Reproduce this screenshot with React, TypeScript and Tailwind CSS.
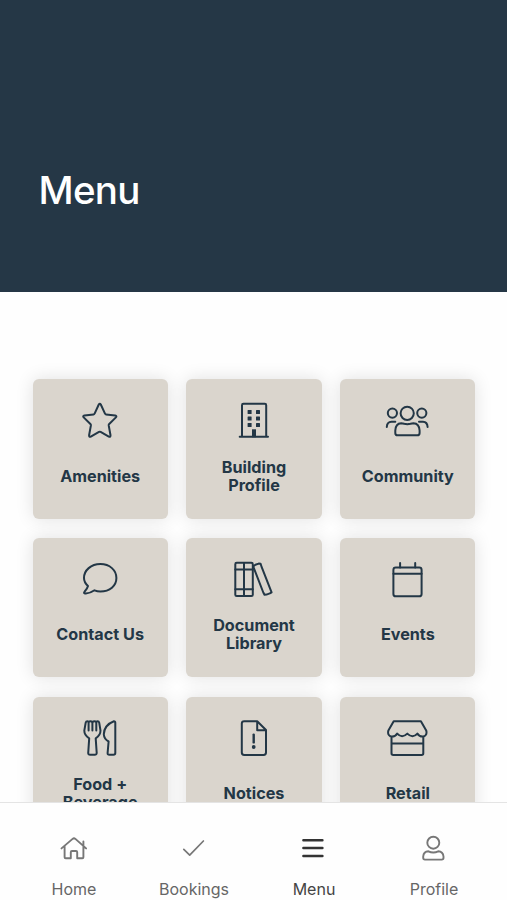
import type { ReactNode } from "react";

type Tile = { lines: string[]; icon: ReactNode };

const tiles: Tile[] = [
  {
    lines: ["Amenities"],
    icon: (
      <path d="M22.8 4.5Q23.8 2.8 24.8 4.5L29 13.6Q29.2 14.3 30 14.4L39.2 15.6Q41.2 16 39.9 17.4L33.2 24Q32.6 24.6 32.7 25.4L34.5 35.3Q34.6 37.4 32.8 36.6L24.6 31.9Q23.8 31.5 23 31.9L14.8 36.6Q13 37.4 13.1 35.3L14.9 25.4Q15 24.6 14.4 24L7.7 17.4Q6.4 16 8.4 15.6L17.6 14.4Q18.4 14.3 18.6 13.6Z" />
    ),
  },
  {
    lines: ["Building", "Profile"],
    icon: (
      <>
        <path d="M12 36.7V5.2Q12 3.8 13.4 3.8H34.8Q36.2 3.8 36.2 5.2V36.7M9.7 36.8H38" />
        <g fill="currentColor" stroke="none">
          <rect x="17.6" y="10" width="4" height="4" rx=".5" />
          <rect x="26" y="10" width="4" height="4" rx=".5" />
          <rect x="17.6" y="16.5" width="4" height="4" rx=".5" />
          <rect x="26" y="16.5" width="4" height="4" rx=".5" />
          <rect x="17.6" y="23" width="4" height="4" rx=".5" />
          <rect x="26" y="23" width="4" height="4" rx=".5" />
          <rect x="22" y="29.3" width="4" height="8" />
        </g>
      </>
    ),
  },
  {
    lines: ["Community"],
    icon: (
      <>
        <circle cx="23.2" cy="13.3" r="6.6" />
        <circle cx="8.4" cy="13.1" r="4.6" />
        <circle cx="37.8" cy="13.1" r="4.6" />
        <path d="M13.5 35.3H33.2Q35.6 35.3 35.6 32.9V30.5Q35.2 23.4 29.5 23.2Q27.8 23.2 26.5 23.7Q23.3 24.6 20.2 23.7Q18.8 23.2 17.2 23.2Q11.6 23.4 11.3 30.5V32.9Q11.3 35.3 13.5 35.3ZM2.8 27Q3 21.8 7.5 21.7H11.3M35 21.7H39Q43.3 21.8 43.6 27" />
      </>
    ),
  },
  {
    lines: ["Contact Us"],
    icon: (
      <path d="M24.4 5.1C33.8 5.1 40.4 11.2 40.4 19C40.4 26.8 33.8 32.5 24.4 32.5Q21.4 32.5 18.5 31.3Q13.5 34.8 9 34.4Q7.4 34.1 8.5 32.8Q11.2 30 12 27Q8 23.5 8 19C8 11.2 15 5.1 24.4 5.1Z" />
    ),
  },
  {
    lines: ["Document", "Library"],
    icon: (
      <>
        <rect x="5.3" y="3.8" width="17.5" height="33.3" rx="1.4" />
        <path d="M14 4V37M5.3 10.4H22.8M5.3 30.3H22.8M23.2 7.4L25.4 5.8L28.7 4.6L30.6 4.8L31.7 8.2L40.7 31.1L41.6 33.3L39.8 34.4L36.5 35.6L34.5 35.8L33.3 33.5L23.2 7.4" />
      </>
    ),
  },
  {
    lines: ["Events"],
    icon: (
      <>
        <rect x="9.4" y="8.5" width="28.2" height="28.8" rx="2.4" />
        <path d="M9.4 14.7H37.6M16.1 3.9V8.5M31.2 3.9V8.5" />
      </>
    ),
  },
  {
    lines: ["Food +", "Beverage"],
    icon: (
      <>
        <path d="M12.6 12.4V4.4Q12.6 3.2 11.4 3.2Q10 3.2 9.7 4.6L8.3 12.6Q8.3 17.4 13.2 20.4L12.2 35Q12.3 36.8 14.1 36.8H18.8Q20.5 36.8 20.7 35L19.7 20.4Q24.5 17.4 24.5 12.6L23.2 4.6Q22.9 3.2 21.5 3.2Q20.3 3.2 20.3 4.4V12.4M12.6 4.2Q13.4 3.2 14.5 3.2Q16.4 3.2 16.4 5V12.4M16.4 5Q16.4 3.2 18.4 3.2Q19.5 3.2 20.3 4.2" />
        <path d="M37.9 3.2Q39.3 3.2 39.3 4.8V35Q39.3 36.8 37.5 36.8H33.3Q31.5 36.8 31.6 35L32.6 23.5Q28.1 21.2 27.8 16.3Q28.1 7 37.9 3.2Z" />
      </>
    ),
  },
  {
    lines: ["Notices"],
    icon: (
      <>
        <path d="M14.2 3.2H27.2L36 12V34.6Q36 37 33.6 37H14.2Q11.8 37 11.8 34.6V5.6Q11.8 3.2 14.2 3.2ZM27.2 3.4V12.3H35.8" />
        <path strokeWidth="2.4" d="M23.7 16.6V24.4" />
        <circle cx="23.7" cy="29" r="1.9" fill="currentColor" stroke="none" />
      </>
    ),
  },
  {
    lines: ["Retail"],
    icon: (
      <path d="M9.7 3.2H36.9L42.2 12.4Q43.5 16.5 40.2 18.3Q36 19.4 33.4 15.6Q28.6 20.8 23.3 15.6Q18 20.8 13.2 15.6Q10.6 19.4 6.4 18.3Q3.1 16.5 4.4 12.4ZM7.5 18.6V35.2Q7.5 36.9 9.2 36.9H37.6Q39.3 36.9 39.3 35.2V18.6M7.5 25.4H39.3" />
    ),
  },
];

const tabs = [
  {
    label: "Home",
    active: false,
    icon: (
      <path d="M3.5 16.4L14.6 6.9Q16 5.8 17.4 6.9L28.1 16.4M25.4 13.7V9.5M6.6 14.2V25.2Q6.6 26.3 7.7 26.3H12.8V20.2Q12.8 19 14 19H18Q19.2 19 19.2 20.2V26.3H24.3Q25.4 26.3 25.4 25.2V14.2" />
    ),
  },
  {
    label: "Bookings",
    active: false,
    icon: <path strokeWidth="1.7" d="M5.8 17.4L11.7 23.2L25.4 9" />,
  },
  {
    label: "Menu",
    active: true,
    icon: <path strokeWidth="2.5" d="M5.4 8.2H24.4M5.4 16.1H24.4M5.4 24.1H24.4" />,
  },
  {
    label: "Profile",
    active: false,
    icon: (
      <>
        <circle cx="15.3" cy="10.7" r="6" />
        <path d="M7 27.6H23.7Q25.5 27.6 25.5 25.8V24.5Q25 19.6 20.2 19.3Q17.8 20.5 15.3 20.5Q12.8 20.5 10.4 19.3Q5.6 19.6 5.2 24.5V25.8Q5.2 27.6 7 27.6Z" />
      </>
    ),
  },
];

function MenuTile({ lines, icon }: Tile) {
  return (
    <button className="flex h-[139.5px] flex-col items-center rounded-md bg-[#dad5cd] pt-[21.4px] text-[#233746] shadow-[0_0_18px_rgba(0,0,0,0.12)]">
      <svg
        className="h-10 w-12 shrink-0"
        viewBox="0 0 48 40"
        fill="none"
        stroke="currentColor"
        strokeWidth="2"
        strokeLinecap="round"
        strokeLinejoin="round"
      >
        {icon}
      </svg>
      <span className="mt-[17.2px] flex h-9 flex-col justify-center text-center text-[16.2px] leading-[18px] font-bold">
        {lines.map((line) => (
          <span key={line}>{line}</span>
        ))}
      </span>
    </button>
  );
}

export default function App() {
  return (
    <div className="flex h-[900px] w-[507px] flex-col overflow-hidden bg-white font-['Inter','Liberation_Sans',sans-serif]">
      <header className="h-[292px] shrink-0 bg-[#253746] pt-[166px] pl-[38.5px]">
        <h1 className="text-[38.5px] leading-[48px] font-medium tracking-[-0.7px] text-white">Menu</h1>
      </header>
      <main className="min-h-0 flex-1 overflow-hidden bg-[#fefefe] pt-[87px] pr-[31.5px] pl-[32.5px]">
        <div className="grid grid-cols-3 gap-x-[18.5px] gap-y-[19.25px]">
          {tiles.map((tile) => (
            <MenuTile key={tile.lines[0]} {...tile} />
          ))}
        </div>
      </main>
      <nav className="grid h-[98px] shrink-0 grid-cols-4 border-t border-[#e4e4e4] bg-[#fefefe] pt-[29px] pr-[13px] pl-[14px]">
        {tabs.map((tab) => (
          <button
            key={tab.label}
            className={`flex flex-col items-center ${tab.active ? "text-[#333333]" : "text-[#777777]"}`}
          >
            <svg
              className="h-8 w-8 shrink-0"
              viewBox="0 0 32 32"
              fill="none"
              stroke="currentColor"
              strokeWidth="1.9"
              strokeLinecap="round"
              strokeLinejoin="round"
            >
              {tab.icon}
            </svg>
            <span className={`mt-[15px] text-base leading-5 ${tab.active ? "text-[#444444]" : "text-[#666666]"}`}>
              {tab.label}
            </span>
          </button>
        ))}
      </nav>
    </div>
  );
}
